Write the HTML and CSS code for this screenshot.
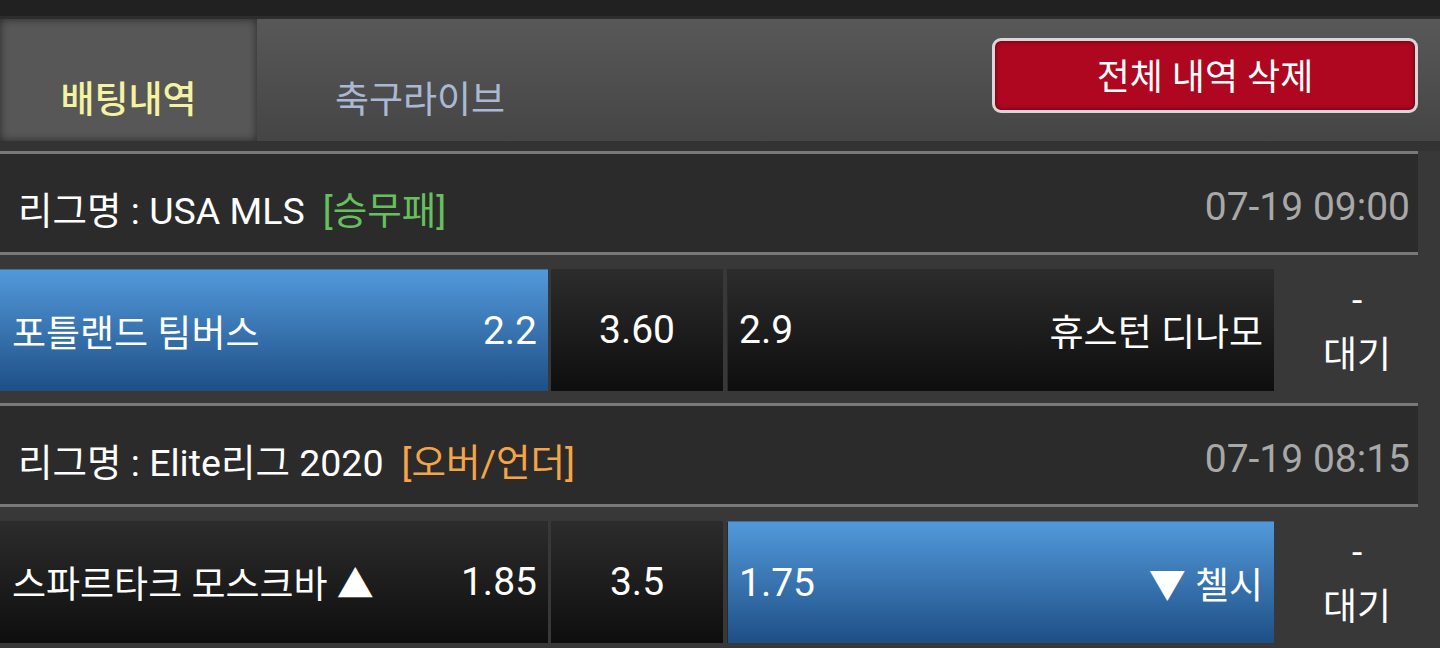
FILE: index.html
```html
<!DOCTYPE html>
<html>
<head>
    <title>배팅내역</title>
    <link rel="stylesheet" href="styles.css">
</head>
<body>
    <div class="topbar"></div>

    <div class="tabs">
        <div class="tab active">배팅내역</div>
        <div class="tab">축구라이브</div>
        <button class="delete-all">전체 내역 삭제</button>
    </div>

    <div class="bet">
        <div class="league">
            <span class="league-name">리그명 : USA MLS</span>
            <span class="type type-1x2">[승무패]</span>
            <span class="time">07-19 09:00</span>
        </div>
        <div class="odds">
            <div class="cell home picked">
                <span class="team">포틀랜드 팀버스</span>
                <span class="rate">2.2</span>
            </div>
            <div class="cell draw"><span class="rate">3.60</span></div>
            <div class="cell away">
                <span class="rate">2.9</span>
                <span class="team">휴스턴 디나모</span>
            </div>
            <div class="status">-<br>대기</div>
        </div>
    </div>

    <div class="bet">
        <div class="league">
            <span class="league-name">리그명 : Elite리그 2020</span>
            <span class="type type-ou">[오버/언더]</span>
            <span class="time">07-19 08:15</span>
        </div>
        <div class="odds">
            <div class="cell home">
                <span class="team">스파르타크 모스크바 ▲</span>
                <span class="rate">1.85</span>
            </div>
            <div class="cell draw"><span class="rate">3.5</span></div>
            <div class="cell away picked">
                <span class="rate">1.75</span>
                <span class="team">▼ 첼시</span>
            </div>
            <div class="status">-<br>대기</div>
        </div>
    </div>
</body>
</html>
```

FILE: styles.css
```css
body {
    font-family: Roboto, "Noto Sans CJK KR", sans-serif;
    background-color: #383838;
    color: #fff;
    margin: 0;
    padding: 0;
    width: 1440px;
    height: 648px;
    overflow: hidden;
}

.topbar {
    height: 16px;
    background-color: #212121;
    border-bottom: 3px solid #2d2d2d;
}

.tabs {
    height: 122px;
    display: flex;
    align-items: stretch;
    background: linear-gradient(to bottom, #585858, #454545);
    border-bottom: 10px solid #333;
}

.tab {
    width: 257px;
    display: flex;
    align-items: center;
    justify-content: center;
    padding-top: 34px;
    font-size: 37px;
    color: #a9b9d3;
    box-sizing: border-box;
}

.tab.active {
    background-color: #575757;
    color: #f4f3a0;
    font-weight: 500;
    box-shadow: inset 0 0 8px rgba(0, 0, 0, 0.55);
}

.tab + .tab {
    width: 326px;
}

.delete-all {
    margin: 19px 22px 0 auto;
    width: 426px;
    height: 75px;
    background-color: #b00720;
    border: 3px solid #d8d8d8;
    border-radius: 9px;
    box-shadow: inset 0 0 4px rgba(0, 0, 0, 0.6);
    color: #fff;
    font-family: Roboto, "Noto Sans CJK KR", sans-serif;
    font-size: 36px;
    font-weight: normal;
    padding: 0 0 4px;
}

.bet {
    width: 1418px;
}

.league {
    height: 104px;
    display: flex;
    align-items: center;
    padding: 8px 8px 0 18px;
    box-sizing: border-box;
    background-color: #2b2b2b;
    border-top: 3px solid #797979;
    border-bottom: 3px solid #797979;
    font-size: 37.5px;
}

.league-name {
    margin-right: 18px;
}

.type-1x2 {
    color: #66c05b;
}

.type-ou {
    color: #f5a446;
}

.time {
    margin-left: auto;
    font-size: 39px;
    color: #a8a8a8;
}

.odds {
    width: 1440px;
    height: 122px;
    display: flex;
    margin: 14px 0 12px;
    font-size: 37px;
}

.cell {
    display: flex;
    align-items: center;
    justify-content: space-between;
    background: linear-gradient(to bottom, #2c2c2c, #0e0e0e);
    box-sizing: border-box;
}

.rate {
    font-size: 39px;
}

.home {
    width: 548px;
    padding: 0 11px 0 12px;
}

.draw {
    width: 172px;
    margin-left: 3px;
    justify-content: center;
}

.away {
    width: 547px;
    margin-left: 4px;
    padding: 0 11px;
    border-left: 1px solid #2a2a2a;
}

.cell.picked {
    background: linear-gradient(to bottom, #5299da, #1e4f86);
    border-top: 1px solid #3f6f9c;
}

.status {
    flex: 1;
    text-align: center;
    line-height: 55px;
    padding-top: 4px;
}
```
